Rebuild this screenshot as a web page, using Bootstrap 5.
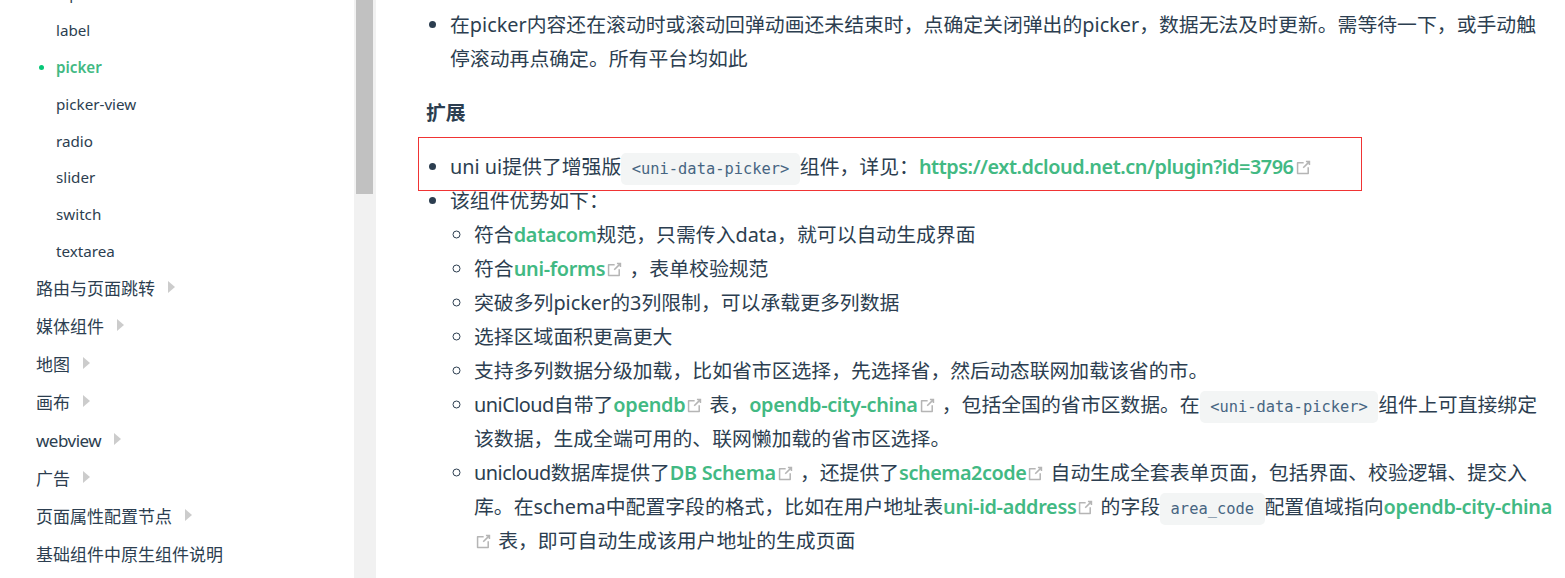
<!DOCTYPE html>
<html lang="zh-CN">
<head>
  <meta charset="UTF-8">
  <title>picker</title>
  <meta name="viewport" content="width=device-width, initial-scale=1">
  <link href="https://cdn.jsdelivr.net/npm/bootstrap@5.3.3/dist/css/bootstrap.min.css" rel="stylesheet">
  <style>
    html, body { height: 100%; overflow: hidden; }
    body {
      background: #fff;
      color: #2c3e50;
      font-family: "Noto Sans", "Noto Sans CJK SC", sans-serif;
    }
    .page-wrap { height: 578px; }
    .side-menu { width: 354px; font-size: 17px; overflow: hidden; flex: none; }
    .side-list { margin-top: -25px; padding-left: 36px; }
    .side-group { height: 38px; line-height: 38px; white-space: nowrap; }
    .side-sub { height: 36.9px; line-height: 36.9px; padding-left: 20px; font-size: 15.2px; position: relative; }
    .side-sub.is-active { color: #42b983; font-weight: 600; }
    .side-sub.is-active::before {
      content: "";
      position: absolute;
      left: 2.5px;
      top: 16px;
      width: 5px;
      height: 5px;
      border-radius: 50%;
      background: #06c777;
    }
    .side-arrow {
      display: inline-block;
      margin-left: 13px;
      vertical-align: 2px;
      border-left: 7px solid #ccc;
      border-top: 6px solid transparent;
      border-bottom: 6px solid transparent;
    }
    .fake-scroll { width: 22px; background: #f1f1f1; flex: none; padding: 0 3px 0 2px; }
    .fake-thumb { height: 194px; background: #c1c1c1; }
    .doc-body { position: relative; flex: 1 1 auto; min-width: 0; font-size: 19.85px; line-height: 34px; white-space: nowrap; padding-top: 8px; }
    .doc-body ul { margin: 0; padding-left: 74px; }
    .doc-body ul ul { padding-left: 24px; }
    .doc-title { font-size: 19.85px; font-weight: 700; line-height: 34px; margin: 20px 0 20px 50px; }
    .doc-body li::marker { color: #2c3e50; }
    .doc-body a { color: #42b983; font-weight: 600; text-decoration: none; letter-spacing: -.3px; }
    .doc-body a.tight-run { letter-spacing: -.45px; }
    .latin-run { letter-spacing: -.5px; }
    .ext-icon { width: 19px; height: 19px; color: #b5b5b5; vertical-align: -3px; }
    .code-chip {
      font-family: "DejaVu Sans Mono", monospace;
      font-size: 15.4px;
      line-height: 1;
      color: #476582;
      background: #f3f5f5;
      border-radius: 5px;
      padding: 7px 10.5px;
    }
    .red-box {
      position: absolute;
      left: 42px;
      top: 137px;
      width: 944px;
      height: 54px;
      border: 1px solid #f03434;
      pointer-events: none;
    }
  </style>
</head>
<body>
<svg width="0" height="0" class="d-block position-absolute">
  <symbol id="ext" viewBox="0 0 100 100">
    <path fill="currentColor" d="M18.8,85.1h56l0,0c2.2,0,4-1.8,4-4v-32h-8v28h-48v-48h28v-8h-32l0,0c-2.2,0-4,1.8-4,4v56C14.8,83.3,16.6,85.1,18.8,85.1z"/>
    <polygon fill="currentColor" points="45.7,48.7 51.3,54.3 77.2,28.5 77.2,37.2 85.2,37.2 85.2,14.9 62.8,14.9 62.8,22.9 71.5,22.9"/>
  </symbol>
</svg>
<div class="d-flex page-wrap">
  <aside class="side-menu">
    <div class="side-list">
      <div class="side-sub">input</div>
      <div class="side-sub">label</div>
      <div class="side-sub is-active">picker</div>
      <div class="side-sub">picker-view</div>
      <div class="side-sub">radio</div>
      <div class="side-sub">slider</div>
      <div class="side-sub">switch</div>
      <div class="side-sub">textarea</div>
      <div class="side-group">路由与页面跳转<span class="side-arrow"></span></div>
      <div class="side-group">媒体组件<span class="side-arrow"></span></div>
      <div class="side-group">地图<span class="side-arrow"></span></div>
      <div class="side-group">画布<span class="side-arrow"></span></div>
      <div class="side-group"><span class="latin-run">webview</span><span class="side-arrow"></span></div>
      <div class="side-group">广告<span class="side-arrow"></span></div>
      <div class="side-group">页面属性配置节点<span class="side-arrow"></span></div>
      <div class="side-group">基础组件中原生组件说明</div>
    </div>
  </aside>
  <div class="fake-scroll"><div class="fake-thumb"></div></div>
  <main class="doc-body">
    <ul>
      <li>在picker内容还在滚动时或滚动回弹动画还未结束时，点确定关闭弹出的picker，数据无法及时更新。需等待一下，或手动触<br>停滚动再点确定。所有平台均如此</li>
    </ul>
    <h4 class="doc-title">扩展</h4>
    <ul>
      <li>uni ui提供了增强版<code class="code-chip">&lt;uni-data-picker&gt;</code>组件，详见：<a class="tight-run" href="#">https://ext.dcloud.net.cn/plugin?id=3796<svg class="ext-icon"><use href="#ext"/></svg></a></li>
      <li>该组件优势如下：
        <ul>
          <li>符合<a href="#">datacom</a>规范，只需传入data，就可以自动生成界面</li>
          <li>符合<a href="#">uni-forms<svg class="ext-icon"><use href="#ext"/></svg></a> ，表单校验规范</li>
          <li>突破多列picker的3列限制，可以承载更多列数据</li>
          <li>选择区域面积更高更大</li>
          <li>支持多列数据分级加载，比如省市区选择，先选择省，然后动态联网加载该省的市。</li>
          <li><span class="latin-run">uniCloud</span>自带了<a href="#">opendb<svg class="ext-icon"><use href="#ext"/></svg></a> 表，<a href="#">opendb-city-china<svg class="ext-icon"><use href="#ext"/></svg></a> ，包括全国的省市区数据。在<code class="code-chip">&lt;uni-data-picker&gt;</code>组件上可直接绑定<br>该数据，生成全端可用的、联网懒加载的省市区选择。</li>
          <li><span class="latin-run">unicloud</span>数据库提供了<a href="#">DB Schema<svg class="ext-icon"><use href="#ext"/></svg></a> ，还提供了<a class="tight-run" href="#">schema2code<svg class="ext-icon"><use href="#ext"/></svg></a> 自动生成全套表单页面，包括界面、校验逻辑、提交入<br>库。在schema中配置字段的格式，比如在用户地址表<a href="#">uni-id-address<svg class="ext-icon"><use href="#ext"/></svg></a> 的字段<code class="code-chip">area_code</code>配置值域指向<a href="#">opendb-city-china</a><br><a href="#"><svg class="ext-icon"><use href="#ext"/></svg></a> 表，即可自动生成该用户地址的生成页面</li>
        </ul>
      </li>
    </ul>
    <div class="red-box"></div>
  </main>
</div>
<script src="https://cdn.jsdelivr.net/npm/bootstrap@5.3.3/dist/js/bootstrap.bundle.min.js"></script>
</body>
</html>
